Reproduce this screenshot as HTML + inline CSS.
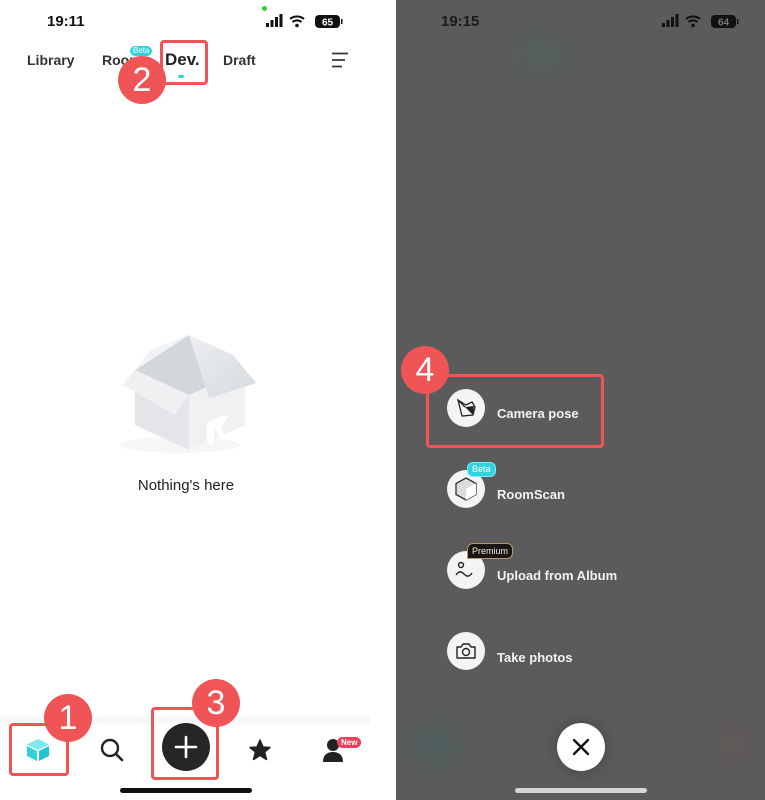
<!DOCTYPE html>
<html><head><meta charset="utf-8"><style>
*{margin:0;padding:0;box-sizing:border-box}
body{width:765px;height:800px;position:relative;overflow:hidden;background:#fff;font-family:"Liberation Sans",sans-serif}
.a{position:absolute}
.t{font-weight:bold;font-size:14px;color:#333}
.red{background:#ef5456;border-radius:50%;color:#fff;font-size:34px;text-align:center;line-height:48px;width:48px;height:48px}
.box{border:3px solid #ef5456;border-radius:4px}
.ci{width:38px;height:38px;border-radius:50%;background:#f4f4f4}
.mt{color:#f2f2f2;font-size:13px;font-weight:bold}
</style></head><body>
<!-- LEFT -->
<div class="a" style="left:47px;top:13px;font-size:15px;font-weight:bold;color:#111">19:11</div>
<div class="a" style="left:262px;top:6px;width:5px;height:5px;border-radius:50%;background:#3c3"></div>
<svg class="a" style="left:266px;top:14px" width="80" height="16">
<rect x="0" y="9" width="3" height="4" fill="#111"/><rect x="4.5" y="6" width="3" height="7" fill="#111"/><rect x="9" y="3" width="3" height="10" fill="#111"/><rect x="13.5" y="0" width="3" height="13" fill="#111"/>
<path d="M24 5a11 11 0 0 1 14 0M26.5 8a7 7 0 0 1 9 0" stroke="#111" stroke-width="2" fill="none"/><circle cx="31" cy="11.5" r="1.8" fill="#111"/>
<rect x="49" y="1" width="25" height="13" rx="4" fill="#111"/><rect x="75" y="5" width="1.5" height="5" fill="#111"/>
<text x="61.5" y="11.5" font-size="10" font-weight="bold" fill="#fff" text-anchor="middle" font-family="Liberation Sans">65</text></svg>
<div class="a t" style="left:27px;top:52px">Library</div>
<div class="a t" style="left:102px;top:52px">Room</div>
<div class="a" style="left:130px;top:46px;background:#2fd3dc;color:#fff;font-size:8px;padding:0 3px;border-radius:5px;line-height:10px">Beta</div>
<div class="a" style="left:165px;top:50px;font-weight:bold;font-size:17px;color:#222">Dev.</div>
<div class="a" style="left:178px;top:75px;width:6px;height:3px;border-radius:2px;background:#2fd3dc"></div>
<div class="a t" style="left:223px;top:52px">Draft</div>
<svg class="a" style="left:332px;top:52px" width="17" height="16"><path d="M0 1.5h16M0 8h13M0 14.5h10" stroke="#333" stroke-width="1.8"/></svg>
<div class="a box" style="left:160px;top:40px;width:48px;height:45px"></div>
<div class="a red" style="left:118px;top:56px">2</div>
<svg class="a" style="left:110px;top:325px" width="160" height="135">
<defs><linearGradient id="g1" x1="0" y1="0" x2="1" y2="1"><stop offset="0" stop-color="#eceef1"/><stop offset="1" stop-color="#d6d9de"/></linearGradient></defs>
<ellipse cx="70" cy="120" rx="60" ry="8" fill="#f6f6f8"/>
<polygon points="25,50 79,25 79,125 25,100" fill="#e3e5e9"/>
<polygon points="79,25 135,50 135,100 79,125" fill="#f0f1f3"/>
<polygon points="79,10 135,45 79,70 25,45" fill="#d3d6db"/>
<polygon points="25,45 13,60 65,90 79,70" fill="#eef0f2"/>
<polygon points="79,10 123,30 146,58 99,73" fill="url(#g1)"/>
<polygon points="79,10 40,25 25,45" fill="#f2f3f5"/>
<path d="M97 98v20h7v-15l8 12h5l-6-12 8-12h-7z" fill="#fff"/>
</svg>
<div class="a" style="left:0;width:372px;top:477px;text-align:center;font-size:15px;color:#222">Nothing's here</div>
<div class="a" style="left:0;top:714px;width:370px;height:12px;background:linear-gradient(#fff,#f0f5f7,#fff)"></div>
<svg class="a" style="left:26px;top:738px" width="24" height="24"><polygon points="12,1 23,6.5 12,12 1,6.5" fill="#7de8ef"/><polygon points="1,8 11,13 11,23 1,18" fill="#2fd3dc"/><polygon points="23,8 13,13 13,23 23,18" fill="#22c6d0"/></svg>
<div class="a box" style="left:9px;top:723px;width:60px;height:53px"></div>
<div class="a red" style="left:44px;top:694px">1</div>
<svg class="a" style="left:100px;top:738px" width="24" height="24"><circle cx="10" cy="10" r="8" stroke="#222" stroke-width="2.4" fill="none"/><path d="M16 16l6 6" stroke="#222" stroke-width="2.6" stroke-linecap="round"/></svg>
<div class="a" style="left:162px;top:723px;width:48px;height:48px;border-radius:50%;background:#262626"></div>
<svg class="a" style="left:174px;top:735px" width="24" height="24"><path d="M12 2v20M2 12h20" stroke="#fff" stroke-width="2.6" stroke-linecap="round"/></svg>
<div class="a box" style="left:151px;top:707px;width:68px;height:73px"></div>
<div class="a red" style="left:192px;top:679px">3</div>
<svg class="a" style="left:249px;top:739px" width="22" height="22"><polygon points="11,1 14,8 21,8.5 15.5,13 17.5,20.5 11,16.5 4.5,20.5 6.5,13 1,8.5 8,8" fill="#222" stroke="#222" stroke-width="1.5" stroke-linejoin="round"/></svg>
<svg class="a" style="left:322px;top:738px" width="26" height="24"><circle cx="11" cy="7" r="6" fill="#222"/><path d="M1 24c0-7 4-10 10-10s10 3 10 10z" fill="#222"/></svg>
<div class="a" style="left:337px;top:737px;background:#ef3f5a;color:#fff;font-size:8px;font-weight:bold;padding:0 4px;border-radius:6px;line-height:11px">New</div>
<div class="a" style="left:120px;top:788px;width:132px;height:5px;border-radius:3px;background:#111"></div>
<!-- RIGHT -->
<div class="a" style="left:396px;top:0;width:369px;height:800px;background:#5b5b5b"></div>
<div class="a" style="left:500px;top:20px;width:80px;height:70px;background:radial-gradient(closest-side,#53605f,#5b5b5b)"></div>
<div class="a" style="left:400px;top:710px;width:70px;height:70px;background:radial-gradient(closest-side,#4b5f5d,#5b5b5b)"></div>
<div class="a" style="left:700px;top:710px;width:65px;height:70px;background:radial-gradient(closest-side,#615a59,#5b5b5b)"></div>
<div class="a" style="left:441px;top:13px;font-size:15px;font-weight:bold;color:#1a1a1a">19:15</div>
<svg class="a" style="left:662px;top:14px" width="80" height="16">
<rect x="0" y="9" width="3" height="4" fill="#111"/><rect x="4.5" y="6" width="3" height="7" fill="#111"/><rect x="9" y="3" width="3" height="10" fill="#111"/><rect x="13.5" y="0" width="3" height="13" fill="#111"/>
<path d="M24 5a11 11 0 0 1 14 0M26.5 8a7 7 0 0 1 9 0" stroke="#111" stroke-width="2" fill="none"/><circle cx="31" cy="11.5" r="1.8" fill="#111"/>
<rect x="49" y="1" width="25" height="13" rx="4" fill="#111"/><rect x="75" y="5" width="1.5" height="5" fill="#111"/>
<text x="61.5" y="11.5" font-size="10" font-weight="bold" fill="#777" text-anchor="middle" font-family="Liberation Sans">64</text></svg>
<div class="a ci" style="left:447px;top:389px"></div>
<svg class="a" style="left:455px;top:397px" width="22" height="22"><path d="M3 3l8 5 6-3 3 5-2 8-11 1z" fill="none" stroke="#222" stroke-width="1.3"/><path d="M10 10l9-1-1 9" fill="#222"/><path d="M3 3l7 7" stroke="#222" stroke-width="1.3"/></svg>
<div class="a mt" style="left:497px;top:406px">Camera pose</div>
<div class="a box" style="left:426px;top:374px;width:178px;height:74px"></div>
<div class="a red" style="left:401px;top:346px">4</div>
<div class="a ci" style="left:447px;top:470px"></div>
<svg class="a" style="left:454px;top:477px" width="24" height="24"><polygon points="12,1 22,6.5 22,17.5 12,23 2,17.5 2,6.5" fill="#ddd" stroke="#333" stroke-width="1.3"/><polygon points="12,12 22,6.5 22,17.5 12,23" fill="#fff"/></svg>
<div class="a" style="left:467px;top:462px;background:#2fd3dc;color:#fff;font-size:9px;padding:0 4px;border-radius:6px;line-height:13px;border:1px solid #7ef">Beta</div>
<div class="a mt" style="left:497px;top:487px">RoomScan</div>
<div class="a ci" style="left:447px;top:551px"></div>
<svg class="a" style="left:455px;top:561px" width="22" height="18"><circle cx="6" cy="4" r="2.5" fill="none" stroke="#222" stroke-width="1.4"/><path d="M1 14c3-4 5-4 8-1s5 3 8-1" fill="none" stroke="#222" stroke-width="1.4"/></svg>
<div class="a" style="left:467px;top:543px;background:#1a1510;color:#eee;font-size:9px;padding:0 4px;border-radius:6px 6px 6px 0;line-height:14px;border:1px solid #b89a6a">Premium</div>
<div class="a mt" style="left:497px;top:568px">Upload from Album</div>
<div class="a ci" style="left:447px;top:632px"></div>
<svg class="a" style="left:455px;top:641px" width="22" height="20"><path d="M2 6h4l2-3h6l2 3h4v11H2z" fill="none" stroke="#222" stroke-width="1.4" stroke-linejoin="round"/><circle cx="11" cy="11" r="3.5" fill="none" stroke="#222" stroke-width="1.4"/></svg>
<div class="a mt" style="left:497px;top:650px">Take photos</div>
<div class="a" style="left:557px;top:723px;width:48px;height:48px;border-radius:50%;background:#fff;box-shadow:0 0 16px rgba(0,0,0,.25)"></div>
<svg class="a" style="left:571px;top:737px" width="20" height="20"><path d="M3 3l14 14M17 3L3 17" stroke="#111" stroke-width="2.4" stroke-linecap="round"/></svg>
<div class="a" style="left:515px;top:788px;width:132px;height:5px;border-radius:3px;background:#d5d5d5"></div>
</body></html>
